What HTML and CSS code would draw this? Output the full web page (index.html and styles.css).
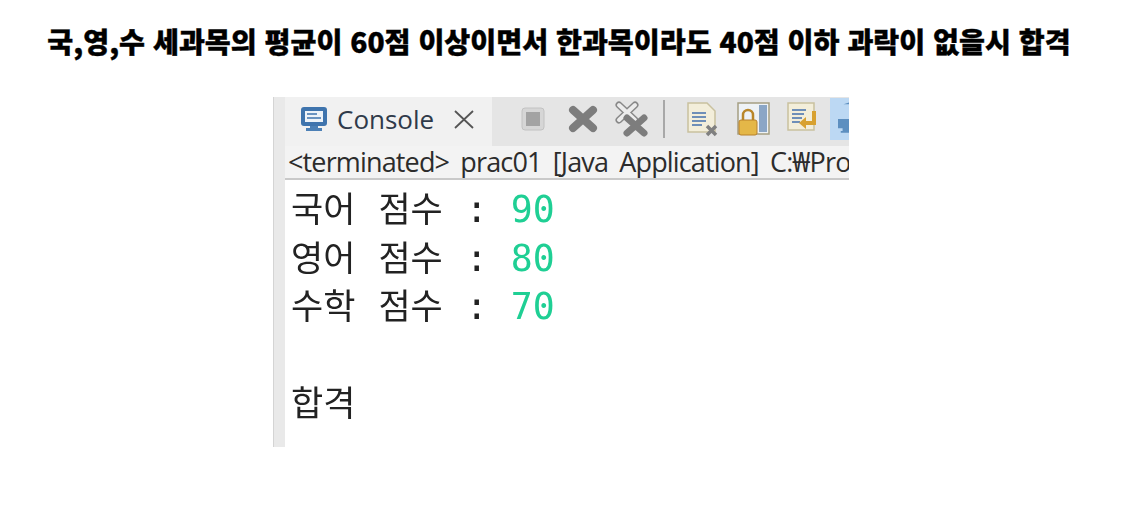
FILE: index.html
```html
<!DOCTYPE html>
<html lang="ko">
<head>
<meta charset="utf-8">
<title>합격</title>
<link rel="stylesheet" href="styles.css">
</head>
<body>
<h1 class="title">국,영,수 세과목의 평균이 60점 이상이면서 한과목이라도 40점 이하 과락이 없을시 합격</h1>
<main class="shot">
  <div class="edge"></div>
  <div class="panel">
    <div class="tabbar">
      <div class="tab">
        <svg class="ico-console" viewBox="0 0 30 30" width="30" height="30"><rect x="2" y="3" width="26" height="19" rx="3" fill="#3f74ad"/><rect x="6" y="7" width="18" height="11" fill="#eef3f8"/><path d="M8 10h10M8 14h14" stroke="#3f74ad" stroke-width="1.6"/><path d="M11 22h8v2h4v3H7v-3h4z" fill="#4c80b6"/></svg>
        <span class="tab-label">Console</span>
        <svg class="ico-close" viewBox="0 0 22 22" width="22" height="22"><path d="M2 3l18 17M20 3L2 20" stroke="#555" stroke-width="1.8"/></svg>
      </div>
      <div class="tools">
        <svg class="t-stop" viewBox="0 0 24 24" width="24" height="24"><rect x="1" y="1" width="22" height="22" rx="3" fill="#d6d6d6" stroke="#c2c2c2"/><rect x="5" y="5" width="14" height="14" fill="#a3a3a3"/></svg>
        <svg class="t-x" viewBox="0 0 30 30" width="30" height="30"><path d="M5 6l20 18M25 6L5 24" stroke="#7d7d7d" stroke-width="8" stroke-linecap="round"/></svg>
        <svg class="t-xx" viewBox="0 0 36 36" width="36" height="36"><path d="M5 4l16 15M21 4L5 19" stroke="#888" stroke-width="7" stroke-linecap="round"/><path d="M5 4l16 15M21 4L5 19" stroke="#ececec" stroke-width="4" stroke-linecap="round"/><path d="M13 17l17 15M30 17L13 32" stroke="#7d7d7d" stroke-width="7" stroke-linecap="round"/></svg>
        <span class="sep"></span>
        <svg class="t-doc" viewBox="0 0 34 36" width="34" height="36"><path d="M2 2h19l8 8v21H2z" fill="#f3eeda" stroke="#c9c19f" stroke-width="1.5"/><path d="M6 12h14M6 16h14M6 20h14M6 24h10" stroke="#6f8fb8" stroke-width="2"/><path d="M21 25l9 9M30 25l-9 9" stroke="#808080" stroke-width="3.5"/></svg>
        <svg class="t-lock" viewBox="0 0 34 36" width="34" height="36"><rect x="2" y="2" width="31" height="31" fill="#eef2f6" stroke="#a59f83" stroke-width="1.5"/><rect x="23" y="4" width="8" height="27" fill="#8ba6c6"/><path d="M7 19v-5a5 5 0 0 1 10 0v5" fill="none" stroke="#b9862a" stroke-width="2.5"/><rect x="3" y="19" width="18" height="15" rx="2" fill="#e4b748" stroke="#b9812a"/></svg>
        <svg class="t-wrap" viewBox="0 0 34 36" width="34" height="36"><path d="M2 2h26v27H2z" fill="#f3eeda" stroke="#c9c19f" stroke-width="1.5"/><path d="M6 9h14M6 13h12M6 17h10M6 21h8" stroke="#6f8fb8" stroke-width="2"/><path d="M28 10v12H17" fill="none" stroke="#d8a130" stroke-width="4"/><path d="M20 16l-7 6 7 6z" fill="#d8a130"/></svg>
        <div class="t-pin"><svg viewBox="0 0 12 36" width="12" height="36"><path d="M6 2h6v16H0v10h5v3h-2v2h9v-33z" fill="#5d8fc0"/></svg></div>
      </div>
    </div>
    <div class="status">&lt;terminated&gt; prac01 [Java Application] C:₩Pro</div>
    <div class="output">
      <div class="line"><span class="ko">국어</span> <span class="ko">점수</span> : <span class="val">90</span></div>
      <div class="line"><span class="ko">영어</span> <span class="ko">점수</span> : <span class="val">80</span></div>
      <div class="line"><span class="ko">수학</span> <span class="ko">점수</span> : <span class="val">70</span></div>
      <div class="line">&nbsp;</div>
      <div class="line"><span class="ko">합격</span></div>
    </div>
  </div>
</main>
</body>
</html>
```
FILE: styles.css
```css
html, body { margin: 0; padding: 0; background: #fff; }
body { width: 1126px; height: 531px; overflow: hidden; }
.title {
  margin: 0;
  padding: 22px 8px 0 0;
  height: 97px;
  box-sizing: border-box;
  text-align: center;
  font: 900 28.2px/38px "Noto Sans CJK KR", sans-serif;
  color: #000;
  white-space: nowrap;
  -webkit-text-stroke: 0.4px #000;
}
.shot { display: flex; width: 576px; height: 350px; margin-left: 273px; overflow: hidden; }
.edge { width: 12px; background: #e9e9e9; border-left: 1px solid #d4d4d4; box-sizing: border-box; flex: none; }
.panel { flex: 1; min-width: 0; display: flex; flex-direction: column; overflow: hidden; filter: blur(0.45px); }
.tabbar { display: flex; height: 49px; background: #e5e5e5; flex: none; }
.tab {
  width: 207px; flex: none; box-sizing: border-box; background: #f1f1f1;
  display: flex; align-items: center; padding: 0 0 5px 14px; gap: 8px;
}
.tab-label { font: 26px/40px "Open Sans", "Noto Sans", sans-serif; color: #2f3a4a; }
.ico-close { margin-left: 11px; }
.tools { flex: 1; display: flex; align-items: center; gap: 16px; padding: 0 0 5px 29px; overflow: hidden; }
.t-x { margin-left: 7px; }
.sep { width: 2px; height: 38px; background: #a8a8a8; margin-left: -3px; }
.t-doc { margin-left: 5px; }
.t-pin { background: #bcd8f3; height: 42px; padding-left: 8px; width: 19px; box-sizing: border-box; flex: none; display: flex; align-items: center; margin-left: -6px; }
.status {
  height: 34px; flex: none; box-sizing: border-box; background: #f3f3f3;
  border-bottom: 2px solid #c9c9c9;
  font: 27px/32px "Open Sans", "Noto Sans", sans-serif; color: #2c2c2c;
  padding-left: 3px; white-space: nowrap; overflow: hidden; letter-spacing: -0.85px; word-spacing: 5px;
}
.output { flex: 1; padding: 3px 0 0 6px; font: 36.5px/48.5px "DejaVu Sans Mono", monospace; color: #222; word-spacing: 1px; }
.line { height: 48.5px; white-space: pre; }
.ko { font: 35px/48.5px "Noto Sans CJK KR", sans-serif; }
.val { color: #1fcf94; }
```
